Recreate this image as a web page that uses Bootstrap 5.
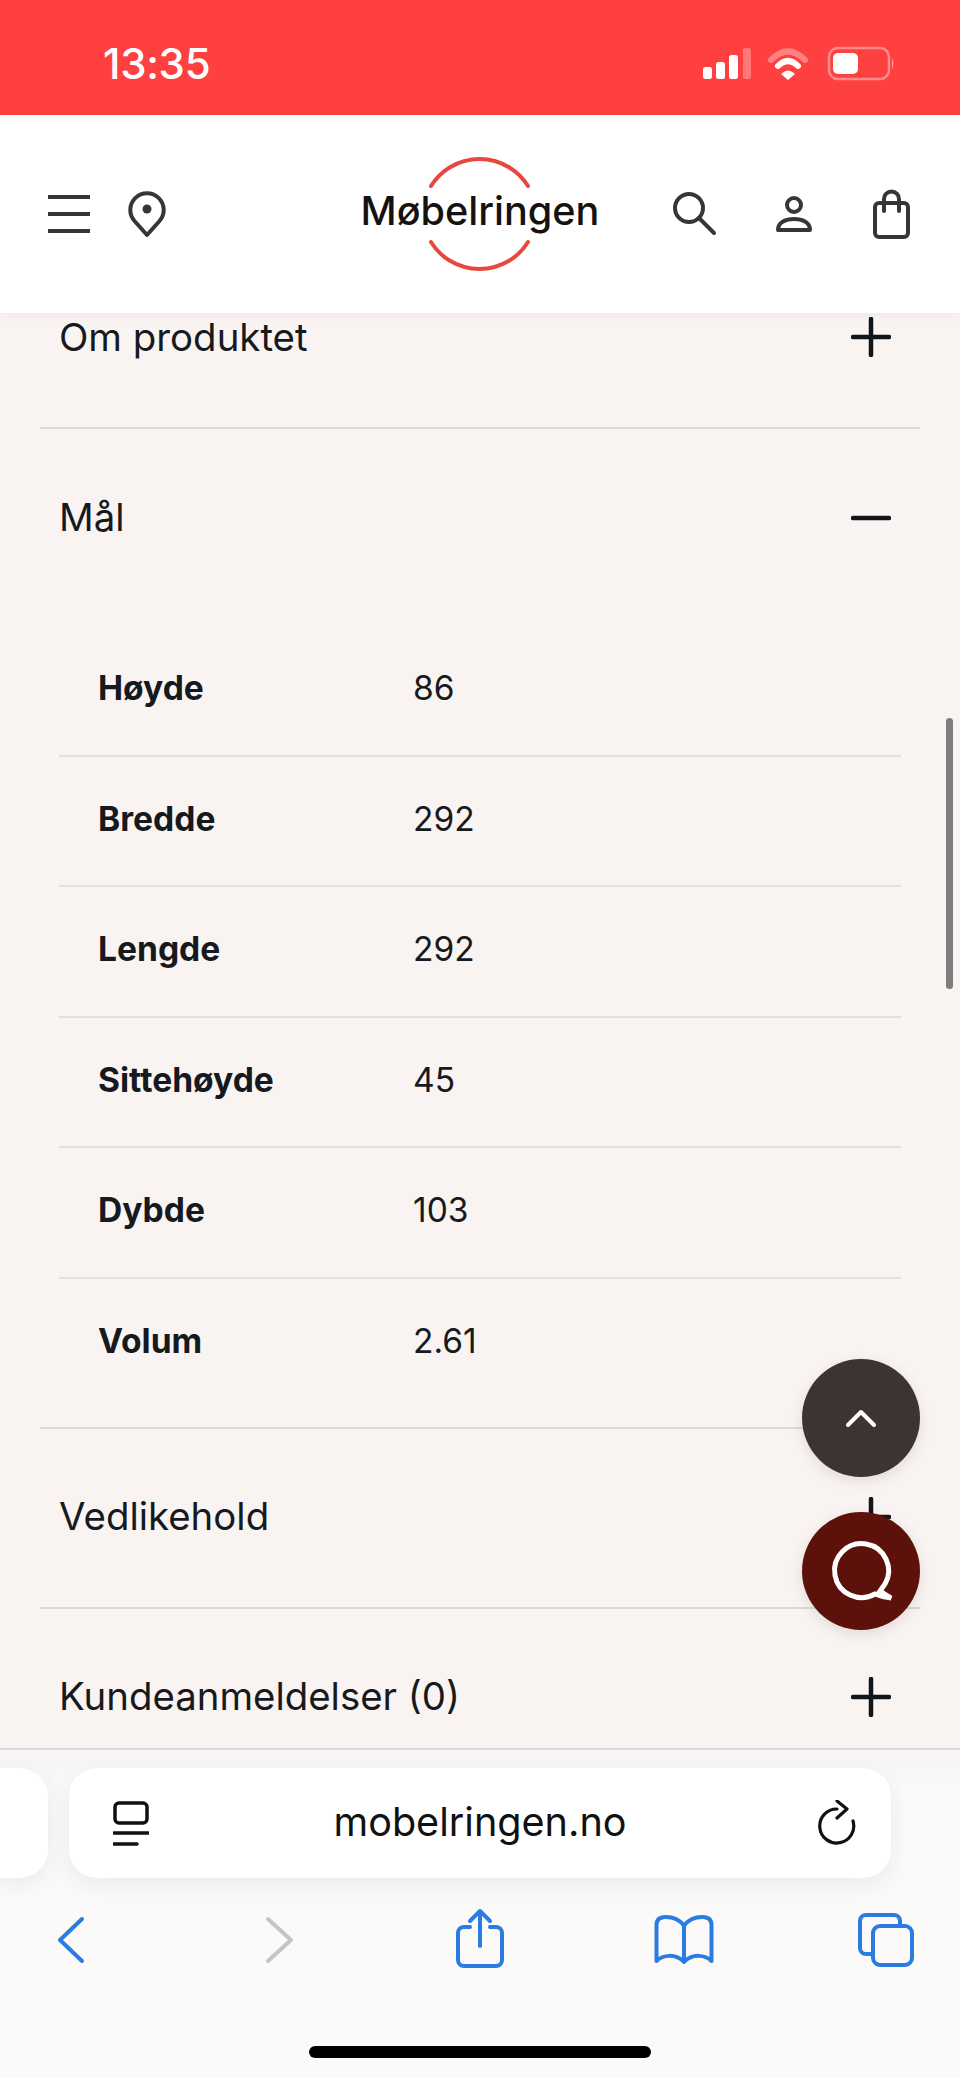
<!doctype html>
<html lang="no">
<head>
<meta charset="utf-8">
<title>Møbelringen</title>
<link rel="stylesheet" href="https://cdn.jsdelivr.net/npm/bootstrap@5.3.0/dist/css/bootstrap.min.css">
<style>
html,body{margin:0;background:#f9f4f2}
body{font-family:Inter,"Liberation Sans",sans-serif;color:#16191d}
.phone{width:960px;height:2078px}
.statusbar{height:115px;background:#ff4040;padding:12px 65px 0 103px;flex:none}
.clock{font-size:42px;font-weight:500;line-height:1;letter-spacing:-.3px}
.sitebar{height:198px;flex:none;padding:0 49px 0 48px;z-index:2;box-shadow:0 2px 10px rgba(0,0,0,.05)}
.side{flex:1 1 0}
.gap-pin{gap:37px}
.gap-tools{gap:57px}
.ico-dark{fill:none;stroke:#3a3535;stroke-width:4}
.logo-word{font-family:Inter,sans-serif;font-size:39.6px;font-weight:500;fill:#17120f}
.content{flex:1 1 0;min-height:0;background:#f9f4f2}
.acc-row{margin:0 40px;padding:0 29px 3px 19px;height:180px;border-bottom:2px solid #dcd8d5;font-size:38.4px;line-height:1.2}
.acc-row.clipped{height:116px;padding-bottom:66px}
.acc-row.open{height:177px;border-bottom:0;padding-bottom:0}
.pm{stroke:#11151a;stroke-width:4.5;stroke-linecap:round;fill:none}
.spec-wrap{margin:19px 40px 0;padding:0 19px 19px;border-bottom:2px solid #dcd8d5}
.spec-table{--bs-table-bg:transparent;--bs-table-color:#16191d;margin:0;font-size:33.5px;border-color:#e4dfdc}
.spec-table td{height:130.5px;padding:0 0 4px;vertical-align:middle;border-bottom-width:2px}
.spec-table tr:last-child td{border-bottom:0}
.spec-table td:first-child{width:354px;padding-left:39px;font-weight:700;font-size:33.6px}
.browserbar{height:330px;flex:none;background:linear-gradient(#f6f4f4,#fcfaf9 40px);border-top:2px solid #dcd9d7}
.tabline{padding:18px 69px 0 0;gap:21px}
.stub{width:48px;height:110px;border-radius:0 28px 28px 0;box-shadow:0 6px 24px rgba(0,0,0,.07)}
.urlbar{height:110px;border-radius:28px;padding:0 35px 0 44px;box-shadow:0 6px 24px rgba(0,0,0,.07);font-size:39.6px}
.urltext{font-family:Inter,sans-serif;color:#111;line-height:1;margin-right:7px}
.toolgrid{display:grid;grid-template-columns:142px 275px 126px 281px 124px;margin-top:30px;justify-items:center}
.blue{fill:none;stroke:#2a7ce2;stroke-width:4;stroke-linecap:round;stroke-linejoin:round}
.homebar{width:342px;height:12px;margin:76px auto 0;background:#000;border-radius:6px}
.fab{width:118px;height:118px;right:40px;box-shadow:0 4px 14px rgba(0,0,0,.1);z-index:3}
.fab-up{top:1359px;background:#3d3432}
.fab-chat{top:1512px;background:#5c120a}
.thumb{right:7px;top:718px;width:7px;height:271px;background:#7d7d7d;border-radius:4px;z-index:3}
</style>
</head>
<body>
<div class="phone d-flex flex-column overflow-hidden position-relative">

  <div class="statusbar d-flex align-items-center justify-content-between text-white">
    <span class="clock">13:35</span>
    <svg width="196" height="40" viewBox="699 44 196 40" aria-hidden="true">
      <g fill="#fff">
        <rect x="703" y="67" width="9" height="12" rx="2.5"/>
        <rect x="716" y="62" width="9" height="17" rx="2.5"/>
        <rect x="729" y="55" width="9" height="24" rx="2.5"/>
        <rect x="743" y="48" width="8" height="31" rx="2.5" opacity=".3"/>
      </g>
      <path d="M771 60Q788 43 805 60" fill="none" stroke="#fff" stroke-width="6" opacity=".35" stroke-linecap="round"/>
      <path d="M778 66Q788 56 798 66" fill="none" stroke="#fff" stroke-width="6" stroke-linecap="round"/>
      <path d="M781 74Q788 67 795 74L788 80Z" fill="#fff"/>
      <rect x="829" y="48" width="60" height="31" rx="9" fill="none" stroke="#fff" stroke-width="2.5" opacity=".4"/>
      <rect x="833" y="53" width="25" height="21" rx="5" fill="#fff"/>
      <path d="M892 58Q895 63 892 69Z" fill="#fff" opacity=".45"/>
    </svg>
  </div>

  <nav class="sitebar bg-white d-flex align-items-center">
    <div class="side d-flex align-items-center gap-pin">
      <svg width="42" height="38" viewBox="48 195 42 38" aria-label="Meny" role="img">
        <path class="ico-dark" d="M48 197H90M48 214H90M48 231H90"/>
      </svg>
      <svg width="40" height="48" viewBox="127.5 190 40 48" aria-label="Butikker" role="img">
        <path class="ico-dark" stroke-linejoin="round" d="M147.5 235L135 221A16.7 16.7 0 1 1 160 221Z"/>
        <circle cx="147.5" cy="209" r="4.5" fill="#3a3535"/>
      </svg>
    </div>
    <svg width="240" height="120" viewBox="360 154 240 120" role="img" aria-label="Møbelringen">
      <path d="M431 186A57 57 0 0 1 528 186M431 242A57 57 0 0 0 528 242" fill="none" stroke="#e6483f" stroke-width="4" stroke-linecap="round"/>
      <text class="logo-word" x="480" y="225" text-anchor="middle">Møbelringen</text>
    </svg>
    <div class="side d-flex align-items-center justify-content-end gap-tools">
      <svg width="44" height="44" viewBox="672 192 44 44" aria-label="Søk" role="img">
        <circle class="ico-dark" cx="688" cy="208" r="14"/>
        <path class="ico-dark" stroke-linecap="round" d="M698 218L713 233"/>
      </svg>
      <svg width="40" height="40" viewBox="773 194 40 40" aria-label="Min side" role="img">
        <circle class="ico-dark" cx="793" cy="205" r="7"/>
        <path class="ico-dark" stroke-linejoin="round" d="M777 230C777 222 785 219 793 219C801 219 809 222 809 230Z"/>
      </svg>
      <svg width="40" height="50" viewBox="871 189 40 50" aria-label="Handlekurv" role="img">
        <rect class="ico-dark" x="875" y="203" width="33" height="34" rx="4"/>
        <path class="ico-dark" stroke-linecap="round" d="M884 211V199A7.5 7.5 0 0 1 899 199V211"/>
      </svg>
    </div>
  </nav>

  <main class="content overflow-hidden">
    <div class="acc-row clipped d-flex align-items-center justify-content-between">
      <span>Om produktet</span>
      <svg width="40" height="40" viewBox="0 0 40 40" aria-hidden="true"><path class="pm" d="M20 2V38M2 20H38"/></svg>
    </div>
    <div class="acc-row open d-flex align-items-center justify-content-between">
      <span>Mål</span>
      <svg width="40" height="40" viewBox="0 0 40 40" aria-hidden="true"><path class="pm" d="M2 20H38"/></svg>
    </div>
    <div class="spec-wrap">
      <table class="table spec-table">
        <tbody>
          <tr><td>Høyde</td><td>86</td></tr>
          <tr><td>Bredde</td><td>292</td></tr>
          <tr><td>Lengde</td><td>292</td></tr>
          <tr><td>Sittehøyde</td><td>45</td></tr>
          <tr><td>Dybde</td><td>103</td></tr>
          <tr><td>Volum</td><td>2.61</td></tr>
        </tbody>
      </table>
    </div>
    <div class="acc-row d-flex align-items-center justify-content-between">
      <span>Vedlikehold</span>
      <svg width="40" height="40" viewBox="0 0 40 40" aria-hidden="true"><path class="pm" d="M20 2V38M2 20H38"/></svg>
    </div>
    <div class="acc-row d-flex align-items-center justify-content-between">
      <span>Kundeanmeldelser (0)</span>
      <svg width="40" height="40" viewBox="0 0 40 40" aria-hidden="true"><path class="pm" d="M20 2V38M2 20H38"/></svg>
    </div>
  </main>

  <footer class="browserbar">
    <div class="tabline d-flex">
      <div class="stub bg-white flex-shrink-0"></div>
      <div class="urlbar bg-white flex-grow-1 d-flex align-items-center justify-content-between">
        <svg width="36" height="46" viewBox="113 1800 36 46" aria-hidden="true">
          <rect x="115" y="1803" width="32" height="20" rx="4" fill="none" stroke="#111" stroke-width="3.5"/>
          <path d="M114 1833H148M114 1844H137" stroke="#111" stroke-width="3.5" stroke-linecap="round" fill="none"/>
        </svg>
        <span class="urltext">mobelringen.no</span>
        <svg width="38" height="46" viewBox="817 1799 38 46" aria-hidden="true">
          <path d="M836 1808A17 17 0 1 0 852 1820M836 1800L846 1808L836 1817" fill="none" stroke="#111" stroke-width="3.2" stroke-linecap="round" stroke-linejoin="round"/>
        </svg>
      </div>
    </div>
    <div class="toolgrid">
      <svg width="30" height="62" viewBox="56 1908 30 62" aria-label="Tilbake" role="img"><path class="blue" d="M82 1919L60 1940L82 1961"/></svg>
      <svg width="30" height="62" viewBox="265 1908 30 62" aria-label="Frem" role="img"><path class="blue" style="stroke:#c4c4c4" d="M268 1919L291 1940L268 1961"/></svg>
      <svg width="52" height="62" viewBox="454 1908 52 62" aria-label="Del" role="img"><path class="blue" d="M470 1927H464A6 6 0 0 0 458 1933V1960A6 6 0 0 0 464 1966H496A6 6 0 0 0 502 1960V1933A6 6 0 0 0 496 1927H490M480 1946V1912M470 1921L480 1911L490 1921"/></svg>
      <svg width="62" height="62" viewBox="652.5 1908 62 62" aria-label="Bokmerker" role="img"><path class="blue" d="M683.5 1926C679 1919 671 1917 665 1917C659 1917 656 1920 656 1925V1961C662 1955 675 1953 683.5 1962C692 1953 705 1955 711 1961V1925C711 1920 708 1917 702 1917C696 1917 688 1919 683.5 1926ZM683.5 1926V1962"/></svg>
      <svg width="60" height="62" viewBox="856 1908 60 62" aria-label="Faner" role="img"><path class="blue" d="M872 1954H866A6 6 0 0 1 860 1948V1921A6 6 0 0 1 866 1915H894A6 6 0 0 1 900 1921V1925"/><rect class="blue" x="873" y="1926" width="39" height="39" rx="7"/></svg>
    </div>
    <div class="homebar"></div>
  </footer>

  <div class="thumb position-absolute"></div>
  <div class="fab fab-up position-absolute rounded-circle d-flex align-items-center justify-content-center">
    <svg width="34" height="22" viewBox="0 0 34 22" aria-label="Til toppen" role="img"><path d="M4 18L17 5L30 18" fill="none" stroke="#fff" stroke-width="4" stroke-linecap="round" stroke-linejoin="round"/></svg>
  </div>
  <div class="fab fab-chat position-absolute rounded-circle d-flex align-items-center justify-content-center">
    <svg width="72" height="72" viewBox="825 1535 72 72" aria-label="Chat" role="img"><path d="M875 1594A27 27 0 1 1 885 1584L880 1591L891 1598Q882 1597 875 1594Z" fill="none" stroke="#fff" stroke-width="5"/></svg>
  </div>
</div>
<script src="https://cdn.jsdelivr.net/npm/bootstrap@5.3.0/dist/js/bootstrap.bundle.min.js"></script>
</body>
</html>
